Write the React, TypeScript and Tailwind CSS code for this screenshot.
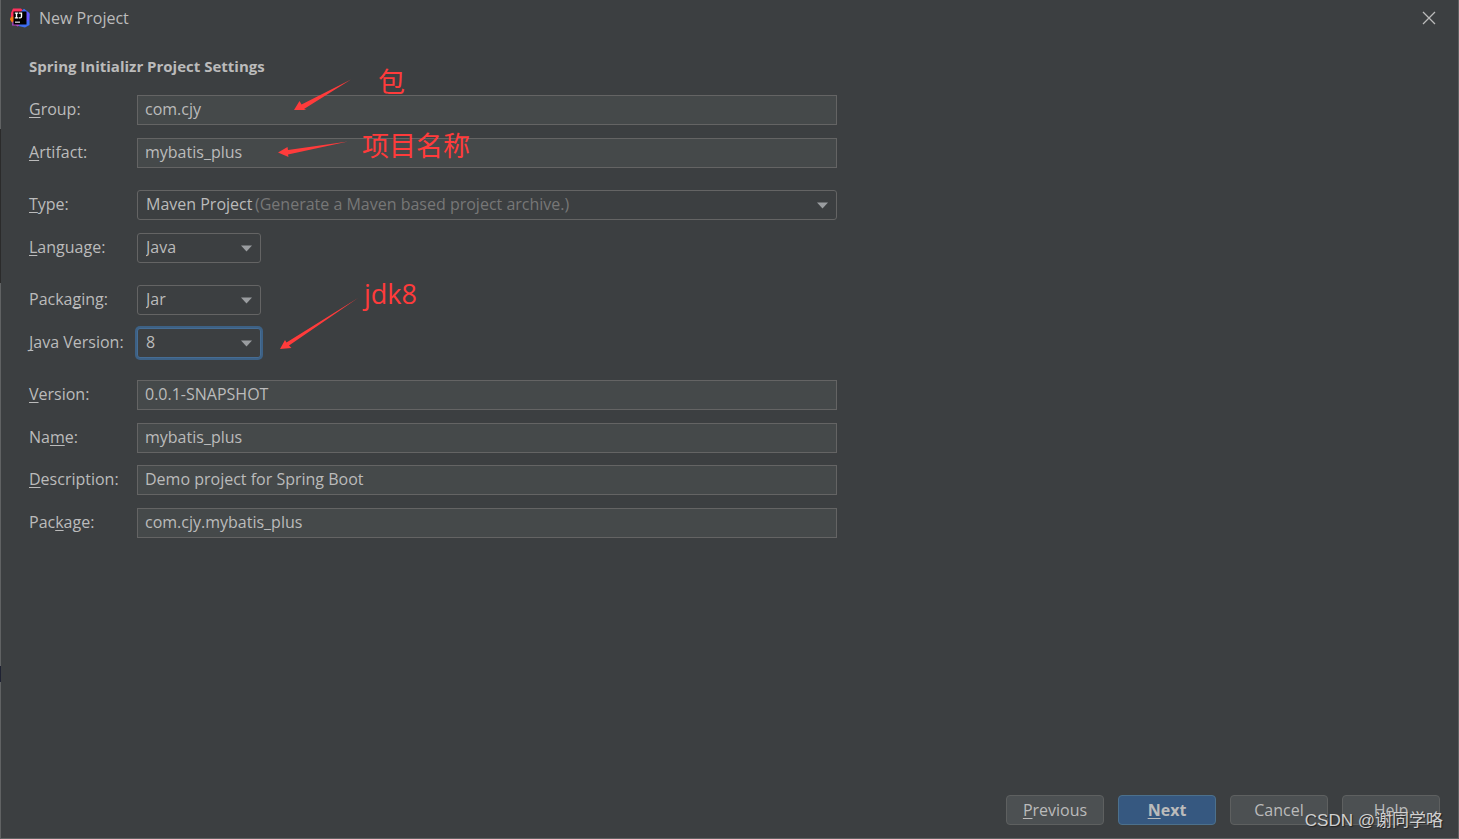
import React, { useState } from 'react';

interface FieldProps {
  id: string;
  label: string;
  mnemonic: number;
}

interface TextRowProps extends FieldProps {
  initial: string;
}

interface SelectRowProps extends FieldProps {
  options: string[];
  hint?: string;
  wide?: boolean;
  focused?: boolean;
}

const Mnemonic: React.FC<{ text: string; index: number }> = ({ text, index }) => (
  <>
    {text.slice(0, index)}
    <span className="underline decoration-1 underline-offset-2 [text-decoration-skip-ink:none]">{text[index]}</span>
    {text.slice(index + 1)}
  </>
);

const FieldLabel: React.FC<FieldProps> = ({ id, label, mnemonic }) => (
  <label htmlFor={id} className="w-[108px] shrink-0 whitespace-nowrap pb-0.5">
    <Mnemonic text={label} index={mnemonic} />
  </label>
);

const TextRow: React.FC<TextRowProps> = ({ initial, ...field }) => {
  const [value, setValue] = useState(initial);

  return (
    <div className="flex items-center">
      <FieldLabel {...field} />
      <input
        id={field.id}
        type="text"
        value={value}
        onChange={(e) => setValue(e.target.value)}
        className="h-[30px] min-w-0 flex-1 border border-[#646464] bg-[#45494a] px-[7px] pb-0.5 outline-none"
      />
    </div>
  );
};

const SelectRow: React.FC<SelectRowProps> = ({ options, hint, wide, focused, ...field }) => {
  const [value, setValue] = useState(options[0]);

  return (
    <div className="flex items-center">
      <FieldLabel {...field} />
      <div className={wide ? 'grid min-w-0 flex-1 items-center' : 'grid w-[124px] items-center'}>
        <select
          id={field.id}
          value={value}
          onChange={(e) => setValue(e.target.value)}
          className={`col-start-1 row-start-1 h-[30px] w-full appearance-none rounded-[3px] border bg-[#3c3f41] pb-0.5 pl-2 pr-7 outline-none ${
            focused ? 'border-[#466d94] ring-2 ring-[#3d6185]' : 'border-[#646464]'
          }`}
        >
          {options.map((option) => (
            <option key={option}>{option}</option>
          ))}
        </select>
        {hint && (
          <span className="pointer-events-none col-start-1 row-start-1 truncate pb-0.5 pl-[118px] pr-8 text-[#777777]">
            {hint}
          </span>
        )}
        <svg
          className="pointer-events-none col-start-1 row-start-1 mr-2 h-[7px] w-3 justify-self-end"
          viewBox="0 0 12 7"
          fill="#9a9da0"
        >
          <path d="M0 0.5h11L5.5 6.5z" />
        </svg>
      </div>
    </div>
  );
};

const IdeaLogo: React.FC = () => (
  <svg className="h-5 w-5" viewBox="0 0 20 20">
    <path d="M1 5 3 0.5h8l3 3-4 8H3L0.8 9z" fill="#fe315d" />
    <path d="M0.5 9.500 4 8v7l-2-0.500L0 11.500z" fill="#f97a12" />
    <path d="M2.500 14l3-3 8 5-6 2.500-1.500-1H2z" fill="#b344c8" />
    <path d="M11 3.500 14 0.8l5.500 4.200v12L15 19.500 8.500 18l4-6z" fill="#3d6df2" />
    <path d="M16 3l3.500 3-0.500 6-3 2z" fill="#6b57ff" />
    <path d="M3.500 3.500h13v13h-13z" fill="#000000" />
    <path d="M4.800 4.500h3.400v1.200H7.200v3.600h1v1.200H4.800V9.300h1V5.700h-1z" fill="#ffffff" />
    <path d="M8.900 4.500h3.300v4q0 2-2 2H8.800V9.300h1.100q0.900 0 0.900-0.900V5.700H8.900z" fill="#ffffff" />
    <path d="M5 13.600h5v1.100H5z" fill="#ffffff" />
  </svg>
);

const DialogButton: React.FC<{ primary?: boolean; children: React.ReactNode }> = ({ primary, children }) => (
  <button
    type="button"
    className={`flex h-[30px] w-[98px] items-center justify-center rounded-[4px] border ${
      primary ? 'border-[#4c708c] bg-[#365880] font-bold' : 'border-[#5e6060] bg-[#4c5052]'
    }`}
  >
    <span>{children}</span>
  </button>
);

// Hand-drawn notes laid over the form
const Annotations: React.FC = () => (
  <div className="pointer-events-none absolute left-0 top-0 text-[27px] leading-9 text-[#ff3b3b]">
    <svg className="h-[400px] w-[500px]" viewBox="0 0 500 400" fill="#ff3b3b">
      <path d="M350 79.500 303 109l2.500 1H293l5.500-9 2 3.500z" />
      <path d="M347 141.500 287 154.500l0.500 2.500-10.500-4.500 9.500-5.500 0.500 3z" />
      <path d="M357 298 288 345.500l2.500 2.500-11.500 1 5-9 1.500 2.500z" />
    </svg>
    <span className="absolute left-[377px] top-[64px]">包</span>
    <span className="absolute left-[361px] top-[128px] whitespace-nowrap">项目名称</span>
    <span className="absolute left-[363px] top-[276px]">jdk8</span>
  </div>
);

export default function App() {
  return (
    <div className="relative flex min-h-screen flex-col border-x border-b border-[#606263] bg-[#3c3f41] font-['Open_Sans','Noto_Sans_CJK_SC',sans-serif] text-[16px] leading-6 text-[#bbbbbb]">
      {/* parts of the window behind that show along the left edge */}
      <div className="pointer-events-none absolute -left-px top-[129px] h-[154px] w-px bg-[#2b2b2b]" />
      <div className="pointer-events-none absolute -left-px top-[666px] h-4 w-px bg-[#1f2233]" />

      <header className="flex h-9 items-center pl-[9px] pr-[22px]">
        <IdeaLogo />
        <h1 className="ml-[9px] flex-1">New Project</h1>
        <button type="button" aria-label="Close">
          <svg className="h-[14px] w-[14px]" viewBox="0 0 14 14" stroke="#bbbbbb" strokeWidth="1.300">
            <path d="M1 1l12 12M13 1L1 13" />
          </svg>
        </button>
      </header>

      <main className="w-[58%] flex-1 pl-7 pr-[9px] pt-[18px]">
        <h2 className="text-[15px] font-bold leading-6">Spring Initializr Project Settings</h2>
        <form className="mt-[17px] flex flex-col gap-[22px]">
          <div className="flex flex-col gap-[13px]">
            <TextRow id="group" label="Group:" mnemonic={0} initial="com.cjy" />
            <TextRow id="artifact" label="Artifact:" mnemonic={0} initial="mybatis_plus" />
          </div>
          <div className="flex flex-col gap-[13px]">
            <SelectRow
              id="type"
              label="Type:"
              mnemonic={0}
              options={['Maven Project', 'Gradle Project']}
              hint="(Generate a Maven based project archive.)"
              wide
            />
            <SelectRow id="language" label="Language:" mnemonic={0} options={['Java', 'Kotlin', 'Groovy']} />
          </div>
          <div className="flex flex-col gap-[13px]">
            <SelectRow id="packaging" label="Packaging:" mnemonic={5} options={['Jar', 'War']} />
            <SelectRow id="javaVersion" label="Java Version:" mnemonic={0} options={['8', '11', '17']} focused />
          </div>
          <div className="flex flex-col gap-3">
            <div className="flex flex-col gap-[13px]">
              <TextRow id="version" label="Version:" mnemonic={0} initial="0.0.1-SNAPSHOT" />
              <TextRow id="name" label="Name:" mnemonic={2} initial="mybatis_plus" />
            </div>
            <div className="flex flex-col gap-[13px]">
              <TextRow id="description" label="Description:" mnemonic={0} initial="Demo project for Spring Boot" />
              <TextRow id="package" label="Package:" mnemonic={3} initial="com.cjy.mybatis_plus" />
            </div>
          </div>
        </form>
      </main>

      <footer className="flex justify-end gap-[14px] pb-[13px] pr-[18px]">
        <DialogButton>
          <Mnemonic text="Previous" index={0} />
        </DialogButton>
        <DialogButton primary>
          <Mnemonic text="Next" index={0} />
        </DialogButton>
        <DialogButton>Cancel</DialogButton>
        <DialogButton>Help</DialogButton>
      </footer>

      <Annotations />
      <span className="pointer-events-none absolute bottom-[5px] right-[15px] whitespace-nowrap font-['Liberation_Sans','Noto_Sans_CJK_SC',sans-serif] text-[17px] text-[#d0d0d0] [text-shadow:1px_1px_1px_#222222]">
        CSDN @谢同学咯
      </span>
    </div>
  );
}
